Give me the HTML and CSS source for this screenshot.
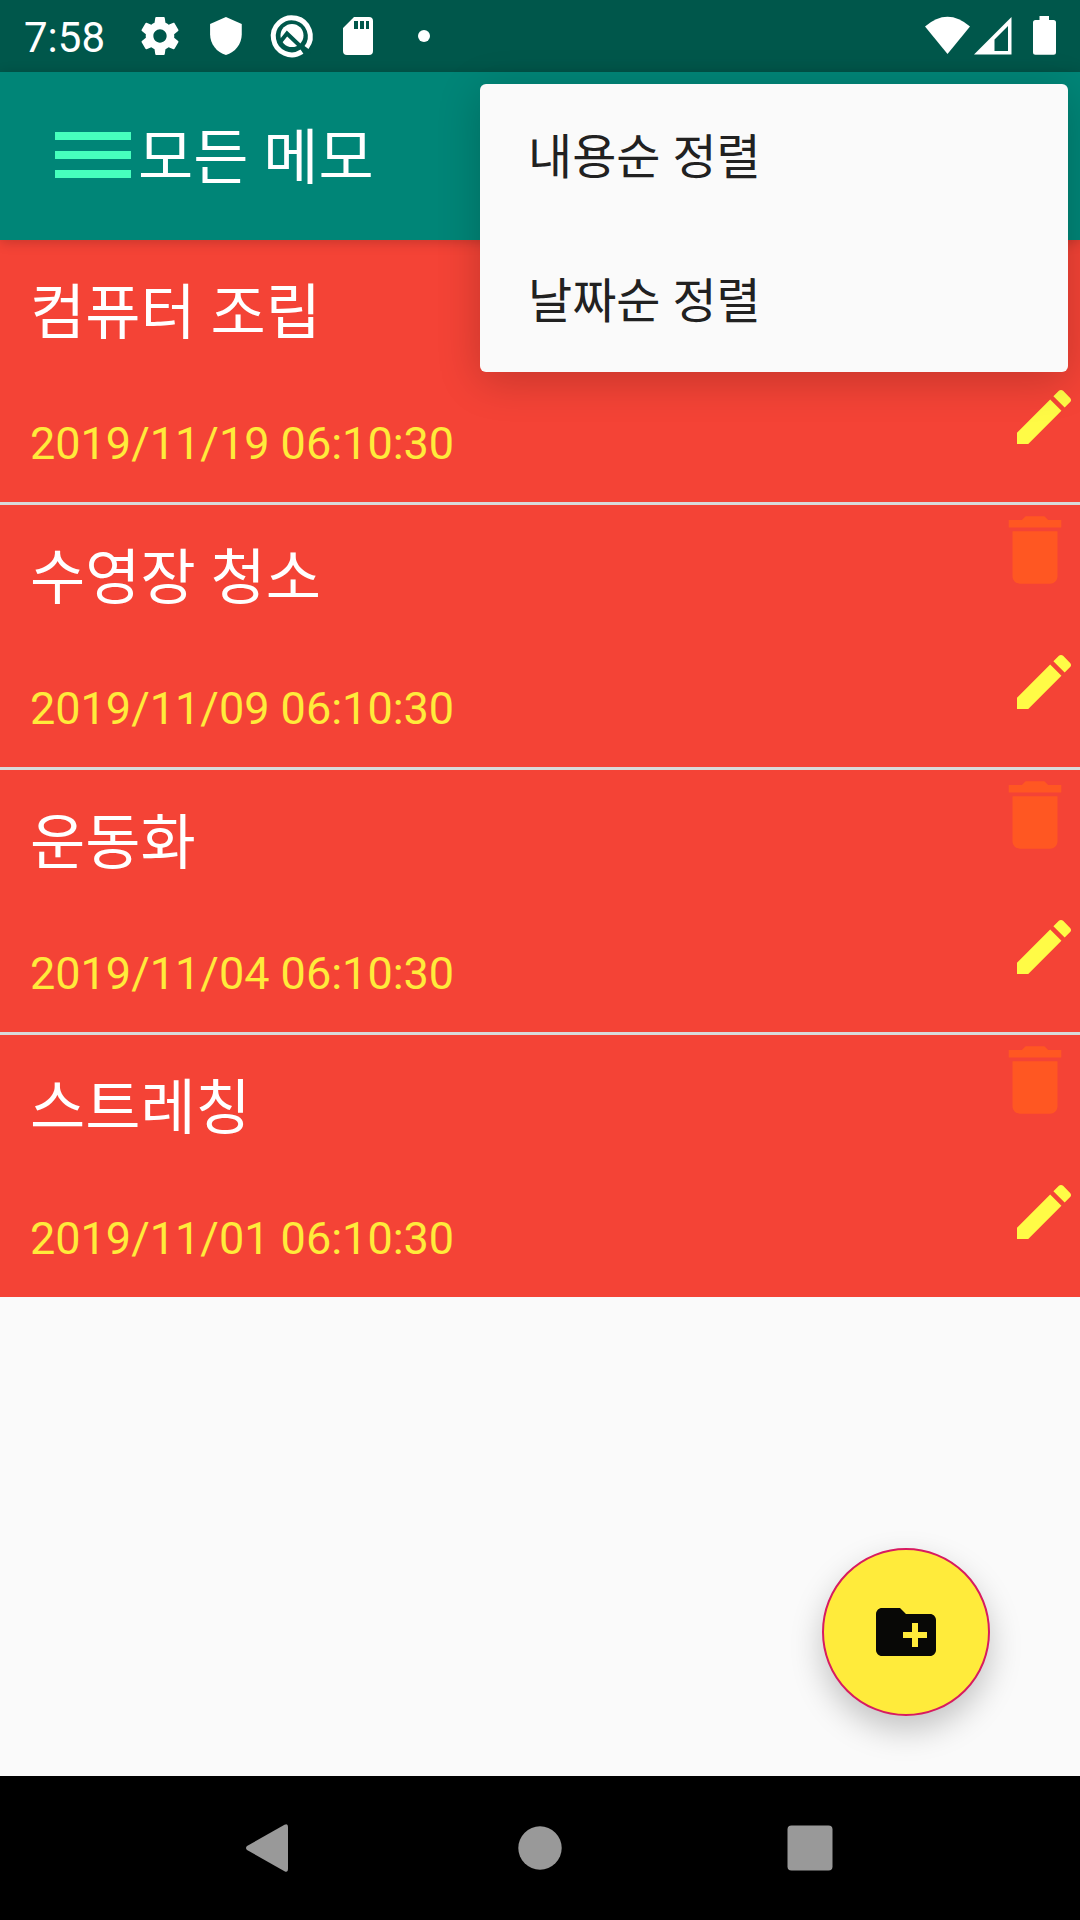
FILE: index.html
```html
<!DOCTYPE html>
<html lang="ko">
<head>
<meta charset="utf-8">
<meta name="viewport" content="width=device-width, initial-scale=1">
<title>모든 메모</title>
<link rel="stylesheet" href="styles.css">
</head>
<body>
<svg class="defs" aria-hidden="true">
  <symbol id="edit" viewBox="0 0 24 24"><path d="M3 17.25V21h3.75L17.81 9.94l-3.75-3.75L3 17.25zM20.71 7.04c.39-.39.39-1.02 0-1.41l-2.34-2.34c-.39-.39-1.02-.39-1.41 0l-1.83 1.83 3.75 3.75 1.83-1.83z"/></symbol>
  <symbol id="delete" viewBox="0 0 24 24"><path d="M6 19c0 1.1.9 2 2 2h8c1.1 0 2-.9 2-2V7H6v12zM19 4h-3.5l-1-1h-5l-1 1H5v2h14V4z"/></symbol>
</svg>
<div class="screen">
  <div class="status-bar">
    <span class="clock">7:58</span>
    <div class="notifications">
      <svg class="notification" viewBox="0 0 66 72"><path transform="translate(10.2 13.2) scale(1.9)" d="M19.43 12.98c.04-.32.07-.64.07-.98s-.03-.66-.07-.98l2.11-1.65c.19-.15.24-.42.12-.64l-2-3.46c-.12-.22-.39-.3-.61-.22l-2.49 1c-.52-.4-1.08-.73-1.69-.98l-.38-2.65C14.46 2.18 14.25 2 14 2h-4c-.25 0-.46.18-.49.42l-.38 2.65c-.61.25-1.17.59-1.69.98l-2.49-1c-.23-.09-.49 0-.61.22l-2 3.46c-.13.22-.07.49.12.64l2.11 1.65c-.04.32-.07.65-.07.98s.03.66.07.98l-2.11 1.65c-.19.15-.24.42-.12.64l2 3.46c.12.22.39.3.61.22l2.49-1c.52.4 1.08.73 1.69.98l.38 2.65c.03.24.24.42.49.42h4c.25 0 .46-.18.49-.42l.38-2.65c.61-.25 1.17-.59 1.69-.98l2.49 1c.23.09.49 0 .61-.22l2-3.46c.12-.22.07-.49-.12-.64l-2.11-1.65zM12 15.5c-1.93 0-3.5-1.57-3.5-3.5s1.57-3.5 3.5-3.5 3.5 1.57 3.5 3.5-1.57 3.5-3.5 3.5z"/></svg>
      <svg class="notification" viewBox="0 0 66 72"><path transform="translate(11.8 15.4) scale(1.76 1.72)" d="M12 1L3 5v6c0 5.55 3.84 10.74 9 12 5.16-1.26 9-6.45 9-12V5l-9-4z"/></svg>
      <svg class="notification" viewBox="0 0 66 72">
        <path class="ring" d="M43 51.700A18.500 18.500 0 1 1 47.500 47.500"/>
        <circle cx="33" cy="35.500" r="11.500"/>
        <path class="cut" d="M22 41l6-7.500 22 21"/>
      </svg>
      <svg class="notification" viewBox="0 0 66 72"><path d="M29 17h15a4 4 0 0 1 4 4v30a4 4 0 0 1-4 4H22a4 4 0 0 1-4-4V28zM29 21v8h4v-8zm6 0v8h4v-8zm6 0v8h3v-8z" fill-rule="evenodd"/></svg>
      <svg class="notification" viewBox="0 0 66 72"><circle cx="33" cy="36" r="6"/></svg>
    </div>
    <svg class="signals" viewBox="0 0 140 72">
      <path d="M5 26.500Q27.500 7 50 26.500L27.500 54z"/>
      <path fill-rule="evenodd" d="M54 54.500L91.500 17v37.500zM74.500 51H88V26L74.500 39.500z"/>
      <path d="M119.500 16h9.500v4h4.500a2.500 2.500 0 0 1 2.500 2.500v29.700a2.500 2.500 0 0 1-2.500 2.500h-18a2.500 2.500 0 0 1-2.500-2.500V22.500a2.500 2.500 0 0 1 2.500-2.500h4z"/>
    </svg>
  </div>

  <header class="app-bar">
    <button class="icon-button drawer" aria-label="메뉴 열기"><svg class="drawer-icon" viewBox="0 0 76 46"><path d="M0 0h76v8H0zM0 19h76v8H0zM0 38h76v8H0z"/></svg></button>
    <h1 class="title">모든 메모</h1>
    <div class="sort-menu" role="menu">
      <button class="sort-item" role="menuitem">내용순 정렬</button>
      <button class="sort-item" role="menuitem">날짜순 정렬</button>
    </div>
  </header>

  <main class="content">
    <ul class="memos">
      <li class="memo">
        <div class="memo-text"><h2 class="memo-title">컴퓨터 조립</h2><time class="memo-date">2019/11/19 06:10:30</time></div>
        <div class="memo-actions">
          <button class="icon-button" aria-label="삭제"><svg class="delete-icon"><use href="#delete"/></svg></button>
          <button class="icon-button" aria-label="편집"><svg class="edit-icon"><use href="#edit"/></svg></button>
        </div>
      </li>
      <li class="memo">
        <div class="memo-text"><h2 class="memo-title">수영장 청소</h2><time class="memo-date">2019/11/09 06:10:30</time></div>
        <div class="memo-actions">
          <button class="icon-button" aria-label="삭제"><svg class="delete-icon"><use href="#delete"/></svg></button>
          <button class="icon-button" aria-label="편집"><svg class="edit-icon"><use href="#edit"/></svg></button>
        </div>
      </li>
      <li class="memo">
        <div class="memo-text"><h2 class="memo-title">운동화</h2><time class="memo-date">2019/11/04 06:10:30</time></div>
        <div class="memo-actions">
          <button class="icon-button" aria-label="삭제"><svg class="delete-icon"><use href="#delete"/></svg></button>
          <button class="icon-button" aria-label="편집"><svg class="edit-icon"><use href="#edit"/></svg></button>
        </div>
      </li>
      <li class="memo">
        <div class="memo-text"><h2 class="memo-title">스트레칭</h2><time class="memo-date">2019/11/01 06:10:30</time></div>
        <div class="memo-actions">
          <button class="icon-button" aria-label="삭제"><svg class="delete-icon"><use href="#delete"/></svg></button>
          <button class="icon-button" aria-label="편집"><svg class="edit-icon"><use href="#edit"/></svg></button>
        </div>
      </li>
    </ul>
    <button class="add-button" aria-label="메모 추가"><svg class="add-icon" viewBox="0 0 24 24"><path d="M20 6h-8l-2-2H4c-1.110 0-1.990.89-1.990 2L2 18c0 1.110.89 2 2 2h16c1.110 0 2-.89 2-2V8c0-1.110-.89-2-2-2zm-1 8h-3v3h-2v-3h-3v-2h3V9h2v3h3v2z"/></svg></button>
  </main>

  <nav class="system-nav">
    <button class="icon-button" aria-label="뒤로"><svg class="nav-icon" viewBox="0 0 48 48"><path d="M1 22L38.500 .8Q42 -1 42 3v42q0 4-3.500 2.200L1 26Q-1 24 1 22z"/></svg></button>
    <button class="icon-button" aria-label="홈"><svg class="nav-icon" viewBox="0 0 48 48"><circle cx="24" cy="24" r="21.700"/></svg></button>
    <button class="icon-button" aria-label="최근 앱"><svg class="nav-icon" viewBox="0 0 48 48"><rect x="1.500" y="1.500" width="45" height="45" rx="4"/></svg></button>
  </nav>
</div>
</body>
</html>
```
FILE: styles.css
```css
* {
  box-sizing: border-box;
}

body {
  margin: 0;
  background: #fafafa;
  font-family: Roboto, "Noto Sans CJK KR", sans-serif;
}

h1,
h2,
ul {
  margin: 0;
  padding: 0;
  font-weight: 400;
}

button {
  border: 0;
  padding: 0;
  background: none;
  font: inherit;
  color: inherit;
}

svg {
  display: block;
}

.defs {
  position: absolute;
  width: 0;
  height: 0;
}

.screen {
  display: flex;
  flex-direction: column;
  min-height: 100vh;
}

.status-bar {
  display: flex;
  align-items: center;
  height: 72px;
  padding: 0 20px 0 24px;
  background: #00574b;
  color: #fff;
  fill: #fff;
}

.clock {
  width: 103px;
  font-size: 42px;
  line-height: 48px;
  padding-top: 4px;
}

.notifications {
  display: flex;
  flex: 1;
}

.notification {
  width: 66px;
  height: 72px;
}

.ring {
  fill: none;
  stroke: #fff;
  stroke-width: 5;
}

.cut {
  fill: none;
  stroke: #00574b;
  stroke-width: 4;
}

.signals {
  width: 140px;
  height: 72px;
}

.app-bar {
  position: relative;
  z-index: 1;
  display: flex;
  align-items: flex-start;
  gap: 7px;
  height: 168px;
  padding: 52px 55px 0;
  background: #008577;
  color: #fff;
  box-shadow: 0 2px 12px rgba(0, 0, 0, 0.2);
}

.icon-button {
  display: flex;
}

.drawer {
  padding-top: 8px;
}

.drawer-icon {
  width: 76px;
  height: 46px;
  fill: #46ffbd;
}

.title {
  font-size: 60px;
  line-height: 70px;
}

.sort-menu {
  position: absolute;
  top: 12px;
  right: 12px;
  display: flex;
  flex-direction: column;
  width: 588px;
  border-radius: 6px;
  background: #fafafa;
  box-shadow: 0 8px 44px rgba(0, 0, 0, 0.2);
}

.sort-item {
  height: 144px;
  padding: 0 48px 6px;
  color: #212121;
  font-size: 48px;
  text-align: left;
}

.content {
  position: relative;
  flex: 1;
}

.memos {
  list-style: none;
}

.memo {
  display: flex;
  justify-content: space-between;
  height: 262px;
  background: #f44336;
}

.memo + .memo {
  height: 265px;
  border-top: 3px solid #d9d9d9;
}

.memo-text {
  display: flex;
  flex-direction: column;
  justify-content: space-between;
  padding: 38px 30px 34px;
}

.memo-title {
  color: #fff;
  font-size: 60px;
  line-height: 72px;
}

.memo-date {
  color: #ffeb3b;
  font-size: 45px;
  line-height: 48px;
}

.memo-actions {
  display: flex;
  flex-direction: column;
  align-items: flex-end;
  gap: 51px;
}

.delete-icon {
  width: 90px;
  height: 90px;
  fill: #ff5722;
}

.edit-icon {
  width: 72px;
  height: 72px;
  fill: #fffb46;
}

.add-button {
  position: absolute;
  right: 90px;
  bottom: 60px;
  display: flex;
  align-items: center;
  justify-content: center;
  width: 168px;
  height: 168px;
  border: 2px solid #d81b60;
  border-radius: 50%;
  background: #ffeb3b;
  box-shadow: 0 14px 32px rgba(0, 0, 0, 0.22);
}

.add-icon {
  width: 72px;
  height: 72px;
  fill: #080806;
}

.system-nav {
  display: flex;
  align-items: center;
  justify-content: center;
  gap: 222px;
  height: 144px;
  background: #000;
}

.nav-icon {
  width: 48px;
  height: 48px;
  fill: #999;
}
```
